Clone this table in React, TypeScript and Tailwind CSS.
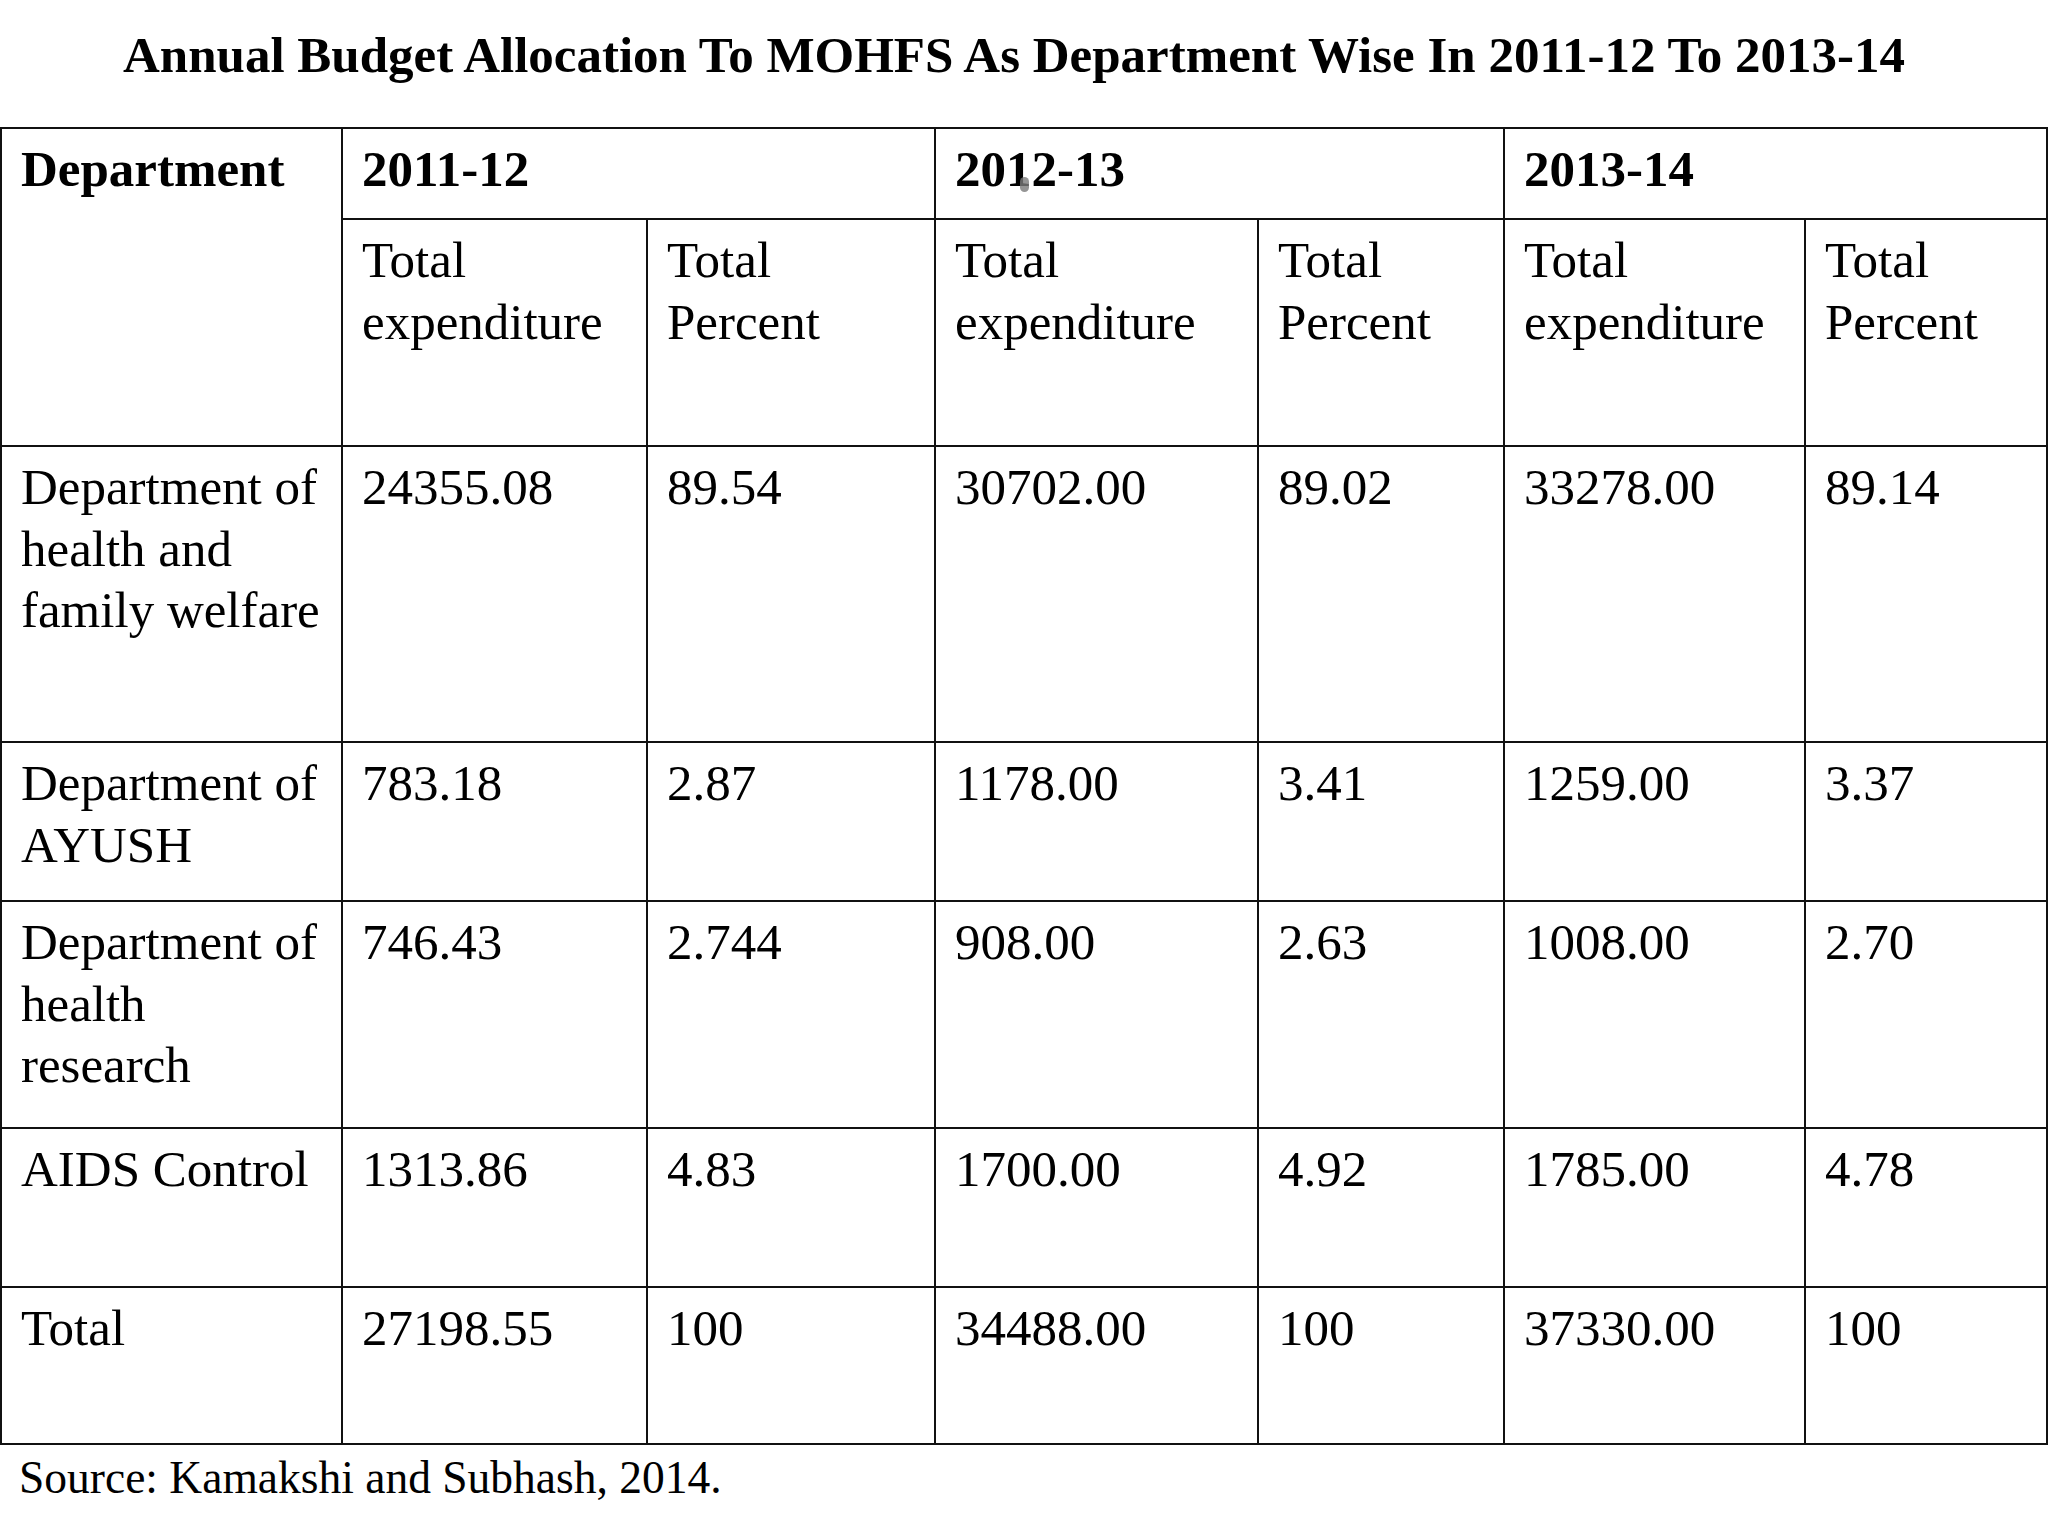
const serif = "font-['Liberation_Serif','Times_New_Roman',serif]";

interface Row {
  dept: string[];
  values: string[];
  height: string;
}

const YEARS = ["2011-12", "2012-13", "2013-14"];

const ROWS: Row[] = [
  {
    dept: ["Department of", "health and", "family welfare"],
    values: ["24355.08", "89.54", "30702.00", "89.02", "33278.00", "89.14"],
    height: "h-[294px]",
  },
  {
    dept: ["Department of", "AYUSH"],
    values: ["783.18", "2.87", "1178.00", "3.41", "1259.00", "3.37"],
    height: "h-[157px]",
  },
  {
    dept: ["Department of", "health", "research"],
    values: ["746.43", "2.744", "908.00", "2.63", "1008.00", "2.70"],
    height: "h-[225px]",
  },
  {
    dept: ["AIDS Control"],
    values: ["1313.86", "4.83", "1700.00", "4.92", "1785.00", "4.78"],
    height: "h-[157px]",
  },
  {
    dept: ["Total"],
    values: ["27198.55", "100", "34488.00", "100", "37330.00", "100"],
    height: "h-[155px]",
  },
];

function Cell({
  children,
  className = "",
}: {
  children: React.ReactNode;
  className?: string;
}) {
  return (
    <div className={`relative bg-white pl-[19px] pt-[10px] leading-[61.5px] ${className}`}>
      {children}
    </div>
  );
}

export default function App() {
  return (
    <div className={`w-[2048px] h-[1536px] overflow-hidden bg-white text-black ${serif}`}>
      <h1 className="h-[127px] pt-[27px] pr-5 text-center text-[51px] font-bold leading-[57px]">
        Annual Budget Allocation To MOHFS As Department Wise In 2011-12 To 2013-14
      </h1>

      <div className="grid grid-cols-[339px_303px_286px_321px_244px_299px_240px] grid-rows-[89px_225px] gap-[2px] bg-[#111] p-[2px] text-[51px]">
        <Cell className="row-span-2 font-bold">Department</Cell>
        {YEARS.map((y, i) => (
          <Cell key={y} className="col-span-2 font-bold">
            {y}
            {/* scan smudge on the original */}
            {i === 1 && (
              <span className="absolute left-[84px] top-[48px] h-[15px] w-[9px] rounded-full bg-[#7a7a7a]/80" />
            )}
          </Cell>
        ))}
        {YEARS.map((y) => (
          <div key={y} className="contents">
            <Cell>
              Total
              <br />
              expenditure
            </Cell>
            <Cell>
              Total
              <br />
              Percent
            </Cell>
          </div>
        ))}

        {ROWS.map((r) => (
          <div key={r.dept.join(" ")} className="contents">
            <Cell className={r.height}>
              {r.dept.map((line, i) => (
                <div key={i}>{line}</div>
              ))}
            </Cell>
            {r.values.map((v, i) => (
              <Cell key={i} className={r.height}>
                {v}
              </Cell>
            ))}
          </div>
        ))}
      </div>

      <p className="mt-[7px] pl-[19px] text-[45.5px] leading-[51px]">
        Source: Kamakshi and Subhash, 2014.
      </p>
    </div>
  );
}
